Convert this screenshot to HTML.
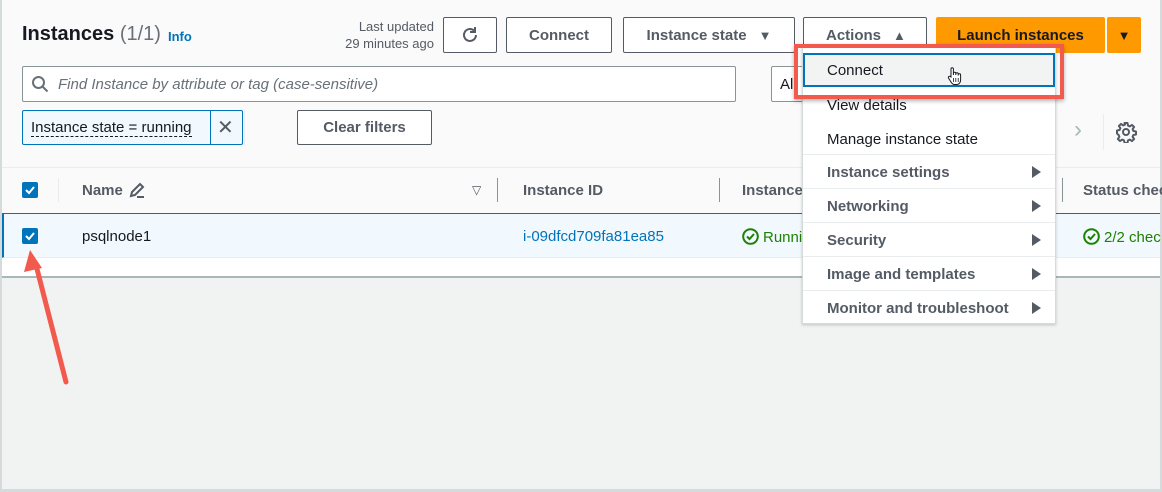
<!DOCTYPE html>
<html><head><meta charset="utf-8"><style>
*{box-sizing:border-box;margin:0;padding:0}
body{width:1162px;height:492px;overflow:hidden;background:#fafafa;font-family:"Liberation Sans",sans-serif;color:#16191f;position:relative}
.a{position:absolute}
.btn{position:absolute;border:1px solid #545b64;border-radius:2px;background:#fff;font-weight:bold;font-size:15px;color:#545b64;display:flex;align-items:center;justify-content:center;height:36px;top:17px}
.mi{position:absolute;left:24px;font-size:15px;color:#16191f}
.b{font-weight:bold;color:#545b64}
.sep{position:absolute;left:0;width:252px;height:1px;background:#eaeded}
.tri{position:absolute;left:229px;width:0;height:0;border-top:6px solid transparent;border-bottom:6px solid transparent;border-left:9px solid #545b64}
.cb{position:absolute;width:16px;height:16px;background:#0073bb;border-radius:2px}
.ok{position:absolute;font-size:15px;color:#1d8102;white-space:nowrap}
.ok svg{vertical-align:-3px;margin-right:4px}
</style></head><body>
<div class="a" style="left:0;top:0;width:2px;height:492px;background:#d5dbdb"></div>
<div class="a" style="right:0;top:0;width:2px;height:492px;background:#d5dbdb"></div>
<div class="a" style="left:22px;top:23px;font-size:20px;font-weight:bold">Instances <span style="font-weight:normal;color:#687078">(1/1)</span></div>
<div class="a" style="left:168px;top:29px;font-size:13px;font-weight:bold;color:#0073bb">Info</div>
<div class="a" style="right:728px;top:18px;font-size:13px;color:#545b64;text-align:right;line-height:17px">Last updated<br>29 minutes ago</div>
<div class="btn" style="left:443px;width:54px"><svg width="20" height="20" viewBox="0 0 20 20"><path d="M16 10a6 6 0 1 1-2-4.5" fill="none" stroke="#545b64" stroke-width="2"/><path d="M15 2v5h-5" fill="none" stroke="#545b64" stroke-width="2"/></svg></div>
<div class="btn" style="left:506px;width:106px">Connect</div>
<div class="btn" style="left:623px;width:172px">Instance state <span style="margin-left:12px;font-size:13px">▼</span></div>
<div class="btn" style="left:803px;width:124px;justify-content:flex-start;padding-left:22px">Actions <span style="margin-left:12px;font-size:13px">▲</span></div>
<div class="btn" style="left:936px;width:169px;background:#ff9900;border-color:#ff9900;color:#16191f">Launch instances</div>
<div class="btn" style="left:1107px;width:34px;background:#ff9900;border-color:#ff9900;color:#16191f;font-size:13px">▼</div>
<div class="a" style="left:22px;top:66px;width:714px;height:36px;border:1px solid #879596;border-radius:2px;background:#fff"></div>
<svg class="a" style="left:31px;top:75px" width="18" height="18" viewBox="0 0 18 18"><circle cx="7.5" cy="7.5" r="5.5" fill="none" stroke="#687078" stroke-width="2"/><path d="M11.5 11.5l5 5" stroke="#687078" stroke-width="2"/></svg>
<div class="a" style="left:58px;top:76px;font-size:15px;font-style:italic;color:#687078">Find Instance by attribute or tag (case-sensitive)</div>
<div class="a" style="left:771px;top:66px;width:40px;height:36px;border:1px solid #879596;border-radius:2px;background:#fff;font-size:15px;padding:9px 0 0 8px">Al</div>
<div class="a" style="left:22px;top:110px;width:221px;height:35px;border:1px solid #0073bb;border-radius:2px;background:#f1f8fe"></div>
<div class="a" style="left:210px;top:110px;width:1px;height:35px;background:#0073bb"></div>
<div class="a" style="left:31px;top:119px;font-size:15px;border-bottom:1px dashed #16191f;line-height:17px">Instance state = running</div>
<div class="a" style="left:217px;top:115px;font-size:20px;color:#545b64">✕</div>
<div class="a" style="left:244px;top:110px;width:1px;height:35px;background:#eaeded"></div>
<div class="btn" style="left:297px;top:110px;width:135px;height:35px">Clear filters</div>
<div class="a" style="left:1074px;top:116px;font-size:24px;color:#aab7b8">›</div>
<div class="a" style="left:1103px;top:114px;width:1px;height:36px;background:#eaeded"></div>
<svg class="a" style="left:1115px;top:121px" width="22" height="22" viewBox="0 0 22 22"><path d="M9.5 2h3l.5 2.6 1.8.8 2.2-1.5 2.1 2.1-1.5 2.2.8 1.8 2.6.5v3l-2.6.5-.8 1.8 1.5 2.2-2.1 2.1-2.2-1.5-1.8.8-.5 2.6h-3l-.5-2.6-1.8-.8-2.2 1.5-2.1-2.1 1.5-2.2-.8-1.8L2 12.5v-3l2.6-.5.8-1.8-1.5-2.2 2.1-2.1 2.2 1.5 1.8-.8z" fill="none" stroke="#545b64" stroke-width="2" stroke-linejoin="round"/><circle cx="11" cy="11" r="3" fill="none" stroke="#545b64" stroke-width="2"/></svg>
<div class="a" style="left:2px;top:167px;width:1158px;height:1px;background:#eaeded"></div>
<div class="cb" style="left:22px;top:182px"></div>
<svg class="a" style="left:22px;top:182px" width="16" height="16"><path d="M4 8l3 3 5-6" fill="none" stroke="#fff" stroke-width="2"/></svg>
<div class="a" style="left:58px;top:178px;width:1px;height:24px;background:#eaeded"></div>
<div class="a b" style="left:82px;top:182px;font-size:15px">Name</div>
<svg class="a" style="left:128px;top:181px" width="18" height="18" viewBox="0 0 18 18"><path d="M3 15l1-4 8-8 3 3-8 8z" fill="none" stroke="#545b64" stroke-width="2"/><path d="M9 16h7" stroke="#545b64" stroke-width="2"/></svg>
<div class="a" style="left:472px;top:183px;font-size:12px;color:#545b64">▽</div>
<div class="a" style="left:497px;top:178px;width:1px;height:24px;background:#879596"></div>
<div class="a b" style="left:523px;top:182px;font-size:15px">Instance ID</div>
<div class="a" style="left:719px;top:178px;width:1px;height:24px;background:#879596"></div>
<div class="a b" style="left:742px;top:182px;font-size:15px">Instance</div>
<div class="a" style="left:1062px;top:178px;width:1px;height:24px;background:#879596"></div>
<div class="a b" style="left:1083px;top:182px;font-size:15px;white-space:nowrap">Status chec</div>
<div class="a" style="left:2px;top:213px;width:1158px;height:45px;background:#f1f8fe;border-top:1px solid #0073bb;border-bottom:1px solid #eaeded;border-left:2px solid #0073bb"></div>
<div class="cb" style="left:22px;top:228px"></div>
<svg class="a" style="left:22px;top:228px" width="16" height="16"><path d="M4 8l3 3 5-6" fill="none" stroke="#fff" stroke-width="2"/></svg>
<div class="a" style="left:82px;top:228px;font-size:15px">psqlnode1</div>
<div class="a" style="left:523px;top:228px;font-size:15px;color:#0073bb">i-09dfcd709fa81ea85</div>
<div class="ok" style="left:742px;top:228px"><svg width="17" height="17" viewBox="0 0 17 17"><circle cx="8.5" cy="8.5" r="7.3" fill="none" stroke="#1d8102" stroke-width="2"/><path d="M5 8.5l2.5 2.5 4.5-5" fill="none" stroke="#1d8102" stroke-width="2"/></svg>Runni</div>
<div class="ok" style="left:1083px;top:228px"><svg width="17" height="17" viewBox="0 0 17 17"><circle cx="8.5" cy="8.5" r="7.3" fill="none" stroke="#1d8102" stroke-width="2"/><path d="M5 8.5l2.5 2.5 4.5-5" fill="none" stroke="#1d8102" stroke-width="2"/></svg>2/2 chec</div>
<div class="a" style="left:2px;top:258px;width:1158px;height:18px;background:#fff"></div>
<div class="a" style="left:2px;top:276px;width:1158px;height:2px;background:#aab7b8"></div>
<div class="a" style="left:2px;top:278px;width:1158px;height:214px;background:#f1f2f2"></div>
<div class="a" style="left:0;top:489px;width:1162px;height:3px;background:#d5dbdb"></div>
<!-- menu -->
<div class="a" style="left:802px;top:45px;width:254px;height:279px;background:#fff;border:1px solid #d5dbdb;box-shadow:0 1px 3px rgba(0,0,0,.2)">
<div class="a" style="left:0;top:7px;width:252px;height:34px;background:#f2f3f3;border:2px solid #0073bb"></div>
<div class="mi" style="top:16px">Connect</div>
<svg class="a" style="left:144px;top:20px" width="16" height="20" viewBox="0 0 16 20"><path d="M4 11V3a1.2 1.2 0 0 1 2.4 0v6V7.5a1.2 1.2 0 0 1 2.4 0V9 8a1.2 1.2 0 0 1 2.4 0v1.5-.5a1.2 1.2 0 0 1 2.4 0V14c0 2.5-1.5 4.5-4 4.5H7.5c-1.5 0-2.5-1-3.3-2.3L1.5 12a1.2 1.2 0 0 1 2-1.3z" fill="#fff" stroke="#16191f" stroke-width="1"/><path d="M6.4 12v4M8.8 12v4M11.2 12v4" stroke="#16191f" stroke-width=".8"/></svg>
<div class="mi" style="top:51px">View details</div>
<div class="mi" style="top:85px">Manage instance state</div>
<div class="sep" style="top:108px"></div>
<div class="mi b" style="top:118px">Instance settings</div><div class="tri" style="top:120px"></div>
<div class="sep" style="top:142px"></div>
<div class="mi b" style="top:152px">Networking</div><div class="tri" style="top:154px"></div>
<div class="sep" style="top:176px"></div>
<div class="mi b" style="top:186px">Security</div><div class="tri" style="top:188px"></div>
<div class="sep" style="top:210px"></div>
<div class="mi b" style="top:220px">Image and templates</div><div class="tri" style="top:222px"></div>
<div class="sep" style="top:244px"></div>
<div class="mi b" style="top:254px">Monitor and troubleshoot</div><div class="tri" style="top:256px"></div>
</div>
<div class="a" style="left:794px;top:44px;width:270px;height:55px;border:4px solid #f35a4e;box-shadow:0 2px 4px rgba(0,0,0,.3)"></div>
<svg class="a" style="left:0;top:240px" width="100" height="160"><line x1="66" y1="142" x2="36" y2="25" stroke="#f35a4e" stroke-width="5" stroke-linecap="round"/><path d="M30 10L24 32L42 28Z" fill="#f35a4e"/></svg>
</body></html>
